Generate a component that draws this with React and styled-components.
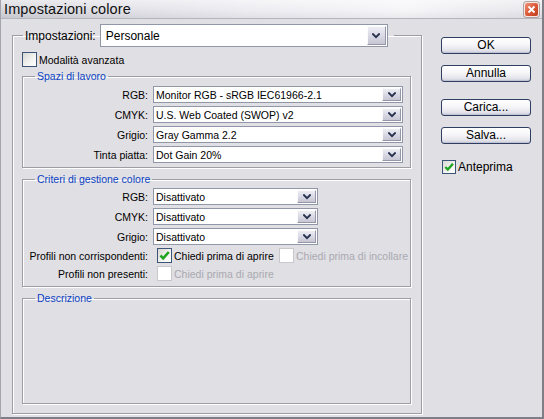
import React from "react";
import styled, { createGlobalStyle } from "styled-components";

const GlobalStyle = createGlobalStyle`
  html, body {
    margin: 0;
    padding: 0;
    background: #e0dfe3;
  }
  body {
    font-family: "Liberation Sans", Arial, sans-serif;
    font-size: 10.5px;
    color: #000;
  }
  * {
    box-sizing: border-box;
  }
`;

const Window = styled.div`
  width: 544px;
  height: 419px;
  display: flex;
  flex-direction: column;
  background: #e0dfe3;
  border-left: 1px solid #a4a4ac;
  border-right: 2px solid #7e7e86;
  border-bottom: 2px solid #7e7e86;
  overflow: hidden;
`;

const TitleBar = styled.div`
  height: 19px;
  flex: none;
  display: flex;
  align-items: center;
  padding: 0 3px 0 3px;
  background: linear-gradient(
      to bottom,
      rgba(255, 255, 255, 0.55) 0%,
      rgba(255, 255, 255, 0.15) 55%,
      rgba(0, 0, 0, 0.04) 100%
    ),
    linear-gradient(to right, #cfcfd7 0%, #e9e9ef 45%, #f4f4f8 75%, #e2e2e8 100%);
  border-bottom: 1px solid #b4b4bc;
`;

const Title = styled.span`
  font-size: 14.5px;
  color: #111;
  letter-spacing: 0.1px;
`;

const CloseButton = styled.span`
  margin-left: auto;
  width: 15px;
  height: 15px;
  display: flex;
  align-items: center;
  justify-content: center;
  border: 1px solid #f4e8e4;
  border-radius: 3px;
  background: linear-gradient(135deg, #f09478 0%, #dc5a3a 50%, #c13a1c 100%);
  box-shadow: 0 0 0 1px #b0a0a0;
`;

const Body = styled.div`
  flex: 1;
  display: flex;
  align-items: flex-start;
  gap: 19px;
  padding: 5px 0 0 11px;
`;

const GroupBox = styled.fieldset`
  margin: 0;
  min-width: 0;
  display: flex;
  flex-direction: column;
  border: 1px solid #9d9da3;
  box-shadow: inset 1px 1px 0 #fff, 1px 1px 0 #fff;
`;

const MainGroup = styled(GroupBox)`
  width: 410px;
  height: 390px;
  padding: 0 10px 9px 9px;
`;

const SubGroup = styled(GroupBox)`
  margin-top: ${(p) => p.$top}px;
  padding: 0 0 ${(p) => p.$bottom}px 0;
  flex: ${(p) => (p.$grow ? 1 : "none")};
`;

const MainLegend = styled.legend`
  margin-left: 1px;
  padding: 0 6px 0 2px;
  display: flex;
  align-items: center;
  gap: 4px;
`;

const MainLabel = styled.span`
  font-size: 12px;
`;

const SubLegend = styled.legend`
  margin-left: 12px;
  padding: 0 2px;
  line-height: 12px;
  color: #0b3fc4;
`;

const FormGrid = styled.div`
  margin-top: ${(p) => p.$top}px;
  display: grid;
  grid-template-columns: 125px auto;
  column-gap: 5px;
  row-gap: 3px;
  justify-content: start;
  align-items: center;
`;

const FieldLabel = styled.span`
  text-align: right;
  white-space: nowrap;
`;

const SelectBox = styled.div`
  width: ${(p) => p.$width}px;
  height: ${(p) => p.$height}px;
  display: flex;
  align-items: stretch;
  background: #fff;
  border: 1px solid #8f97a8;
  padding: 1px;
`;

const SelectText = styled.span`
  flex: 1;
  display: flex;
  align-items: center;
  padding-left: ${(p) => (p.$big ? 4 : 1)}px;
  font-size: ${(p) => (p.$big ? 12 : 10.5)}px;
  white-space: nowrap;
  overflow: hidden;
`;

const ArrowButton = styled.span`
  width: 19px;
  flex: none;
  display: flex;
  align-items: center;
  justify-content: center;
  background: linear-gradient(to bottom, #ededf3 0%, #d8d8e4 55%, #c6c6d4 100%);
  border: 1px solid;
  border-color: #fbfbfd #9696a6 #9696a6 #fbfbfd;
`;

const CheckRow = styled.label`
  display: flex;
  align-items: center;
  gap: ${(p) => p.$gap ?? 2}px;
  height: ${(p) => p.$height ?? 15}px;
  margin-top: ${(p) => p.$top ?? 0}px;
  margin-left: ${(p) => p.$left ?? 0}px;
  width: ${(p) => (p.$width ? `${p.$width}px` : "auto")};
  flex: none;
  color: ${(p) => (p.$disabled ? "#a9a9b1" : "#000")};
  font-size: ${(p) => p.$size ?? 10.5}px;
  white-space: nowrap;
`;

const Box = styled.span`
  width: ${(p) => p.$size}px;
  height: ${(p) => p.$size}px;
  flex: none;
  display: flex;
  align-items: center;
  justify-content: center;
  border: 1px solid ${(p) => (p.$disabled ? "#c8c8cc" : "#3b5478")};
  background: ${(p) =>
    p.$disabled ? "#fff" : "linear-gradient(135deg, #d6d6d2 0%, #f4f4f2 60%, #fff 100%)"};
`;

const ChoiceLine = styled.div`
  display: flex;
  align-items: center;
  padding-left: 4px;
`;

const SideColumn = styled.div`
  display: flex;
  flex-direction: column;
  margin-top: 13px;
`;

const Button = styled.button`
  width: 90px;
  height: 17px;
  margin: ${(p) => p.$top}px 0 0 0;
  padding: 0;
  font-family: "Liberation Sans", Arial, sans-serif;
  font-size: 12px;
  line-height: 15px;
  color: #000;
  border: 1px solid #2f3f62;
  border-radius: 3px;
  background: linear-gradient(to bottom, #ffffff 0%, #f6f6f9 45%, #e4e4ec 80%, #cfcfdc 100%);
  box-shadow: inset 0 -1px 0 #c2c2d2;
`;

const Chevron = () => (
  <svg width="8" height="6" viewBox="0 0 8 6">
    <polyline
      points="1,1.2 4,4.2 7,1.2"
      fill="none"
      stroke="#27324f"
      strokeWidth="2"
      strokeLinecap="square"
    />
  </svg>
);

const CheckMark = ({ size }) => (
  <svg width={size - 2} height={size - 2} viewBox="0 0 13 13">
    <polyline
      points="2.5,6.5 5.2,9.3 10.8,3"
      fill="none"
      stroke="#22a422"
      strokeWidth="2.6"
      strokeLinejoin="miter"
    />
  </svg>
);

function Select({ value, width, height = 17, big }) {
  return (
    <SelectBox $width={width} $height={height}>
      <SelectText $big={big}>{value}</SelectText>
      <ArrowButton>
        <Chevron />
      </ArrowButton>
    </SelectBox>
  );
}

function Check({ label, checked, disabled, size = 15, ...rest }) {
  return (
    <CheckRow $disabled={disabled} {...rest}>
      <Box $size={size} $disabled={disabled}>
        {checked && <CheckMark size={size} />}
      </Box>
      {label}
    </CheckRow>
  );
}

const workspaces = [
  ["RGB:", "Monitor RGB - sRGB IEC61966-2.1"],
  ["CMYK:", "U.S. Web Coated (SWOP) v2"],
  ["Grigio:", "Gray Gamma 2.2"],
  ["Tinta piatta:", "Dot Gain 20%"],
];

const policies = [
  ["RGB:", "Disattivato"],
  ["CMYK:", "Disattivato"],
  ["Grigio:", "Disattivato"],
];

export default function App() {
  return (
    <>
      <GlobalStyle />
      <Window>
        <TitleBar>
          <Title>Impostazioni colore</Title>
          <CloseButton>
            <svg width="9" height="9" viewBox="0 0 9 9">
              <path d="M1.5 1.5 L7.5 7.5 M7.5 1.5 L1.5 7.5" stroke="#fff" strokeWidth="1.8" />
            </svg>
          </CloseButton>
        </TitleBar>
        <Body>
          <MainGroup>
            <MainLegend>
              <MainLabel>Impostazioni:</MainLabel>
              <Select value="Personale" width={288} height={23} big />
            </MainLegend>

            <Check label="Modalità avanzata" $top={5} />

            <SubGroup $top={3} $bottom={4}>
              <SubLegend>Spazi di lavoro</SubLegend>
              <FormGrid $top={4}>
                {workspaces.map(([label, value]) => (
                  <React.Fragment key={label}>
                    <FieldLabel>{label}</FieldLabel>
                    <Select value={value} width={250} />
                  </React.Fragment>
                ))}
              </FormGrid>
            </SubGroup>

            <SubGroup $top={5} $bottom={5}>
              <SubLegend>Criteri di gestione colore</SubLegend>
              <FormGrid $top={3}>
                {policies.map(([label, value]) => (
                  <React.Fragment key={label}>
                    <FieldLabel>{label}</FieldLabel>
                    <Select value={value} width={165} />
                  </React.Fragment>
                ))}
                <FieldLabel>Profili non corrispondenti:</FieldLabel>
                <ChoiceLine>
                  <Check label="Chiedi prima di aprire" checked $width={122} />
                  <Check label="Chiedi prima di incollare" disabled />
                </ChoiceLine>
                <FieldLabel>Profili non presenti:</FieldLabel>
                <ChoiceLine>
                  <Check label="Chiedi prima di aprire" disabled />
                </ChoiceLine>
              </FormGrid>
            </SubGroup>

            <SubGroup $top={5} $bottom={0} $grow>
              <SubLegend>Descrizione</SubLegend>
            </SubGroup>
          </MainGroup>

          <SideColumn>
            <Button $top={0}>OK</Button>
            <Button $top={11}>Annulla</Button>
            <Button $top={17}>Carica...</Button>
            <Button $top={11}>Salva...</Button>
            <Check label="Anteprima" checked size={14} $size={12} $top={16} $left={1} $height={14} />
          </SideColumn>
        </Body>
      </Window>
    </>
  );
}
